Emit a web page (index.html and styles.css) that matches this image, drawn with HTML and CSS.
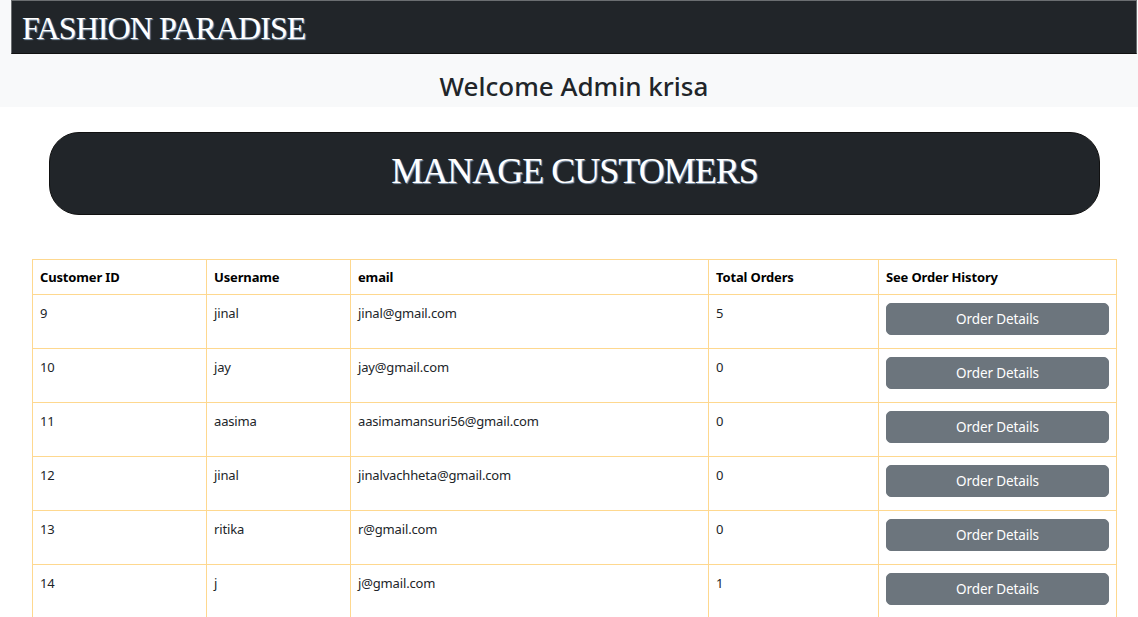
FILE: index.html
```html
<!DOCTYPE html>
<html lang="en">
<head>
<meta charset="utf-8">
<title>Manage Customers</title>
<link rel="stylesheet" href="styles.css">
</head>
<body>
<header class="top">
  <nav class="navbar"><span class="brand">FASHION PARADISE</span></nav>
  <h2 class="welcome">Welcome Admin krisa</h2>
</header>
<section class="banner"><h1 class="banner-title">MANAGE CUSTOMERS</h1></section>
<main class="content">
  <table class="customers">
    <colgroup>
      <col class="c1"><col class="c2"><col class="c3"><col class="c4"><col class="c5">
    </colgroup>
    <thead>
      <tr><th>Customer ID</th><th>Username</th><th>email</th><th>Total Orders</th><th>See Order History</th></tr>
    </thead>
    <tbody>
      <tr><td>9</td><td>jinal</td><td>jinal@gmail.com</td><td>5</td><td><button class="btn">Order Details</button></td></tr>
      <tr><td>10</td><td>jay</td><td>jay@gmail.com</td><td>0</td><td><button class="btn">Order Details</button></td></tr>
      <tr><td>11</td><td>aasima</td><td>aasimamansuri56@gmail.com</td><td>0</td><td><button class="btn">Order Details</button></td></tr>
      <tr><td>12</td><td>jinal</td><td>jinalvachheta@gmail.com</td><td>0</td><td><button class="btn">Order Details</button></td></tr>
      <tr><td>13</td><td>ritika</td><td>r@gmail.com</td><td>0</td><td><button class="btn">Order Details</button></td></tr>
      <tr><td>14</td><td>j</td><td>j@gmail.com</td><td>1</td><td><button class="btn">Order Details</button></td></tr>
    </tbody>
  </table>
</main>
</body>
</html>
```

FILE: styles.css
```css
* { box-sizing: border-box; }
html, body { margin: 0; padding: 0; background: #fff; }
body {
  font-family: "Noto Sans", "Open Sans", sans-serif;
  color: #212529;
  overflow: hidden;
}
.top {
  background: #f8f9fa;
  padding: 0 1px 0 11px;
  height: 107px;
  display: flex;
  flex-direction: column;
}
.navbar {
  height: 54px;
  background: #212529;
  border: 1px solid #6b6e71;
  border-bottom-color: #111;
  display: flex;
  align-items: center;
  padding-left: 10px;
}
.brand {
  font-family: "Liberation Serif", "DejaVu Serif", serif;
  font-size: 32px;
  color: #fff;
  letter-spacing: -0.9px;
  text-shadow: 1px 1px 1px #8aa0b8;
  line-height: 1;
  padding-top: 2px;
}
.welcome {
  margin: 0;
  flex: 1;
  display: flex;
  align-items: center;
  justify-content: center;
  font-size: 26px;
  font-weight: 500;
  color: #212529;
  padding-top: 10px;
}
.banner {
  margin: 25px 38px 0 49px;
  height: 83px;
  background: #212529;
  border: 1px solid #111;
  border-radius: 30px;
  display: flex;
  align-items: center;
  justify-content: center;
}
.banner-title {
  margin: 0;
  font-family: "Liberation Serif", "DejaVu Serif", serif;
  font-weight: 400;
  font-size: 36px;
  letter-spacing: -1px;
  color: #fff;
  text-shadow: 1px 1px 1px #8aa0b8;
  line-height: 1;
  padding-bottom: 5px;
}
.content {
  padding: 44px 22px 0 32px;
}
.customers {
  width: 100%;
  border-collapse: collapse;
  table-layout: fixed;
  font-size: 13px;
  letter-spacing: -0.15px;
}
.c1 { width: 174px; }
.c2 { width: 144px; }
.c3 { width: 358px; }
.c4 { width: 170px; }
.c5 { width: 238px; }
.customers th, .customers td {
  border: 1px solid #fed88f;
  text-align: left;
  vertical-align: top;
  padding: 8px 7px;
}
.customers th {
  font-weight: 700;
  color: #000;
  height: 32px;
  padding-top: 8px;
}
.customers td {
  height: 54px;
  padding-top: 9px;
}
.btn {
  display: block;
  width: 100%;
  height: 32px;
  margin-top: -1px;
  background: #6c757d;
  color: #fff;
  border: 1px solid #6c757d;
  border-radius: 5px;
  font-family: inherit;
  font-size: 13.5px;
  letter-spacing: -0.1px;
}
```
